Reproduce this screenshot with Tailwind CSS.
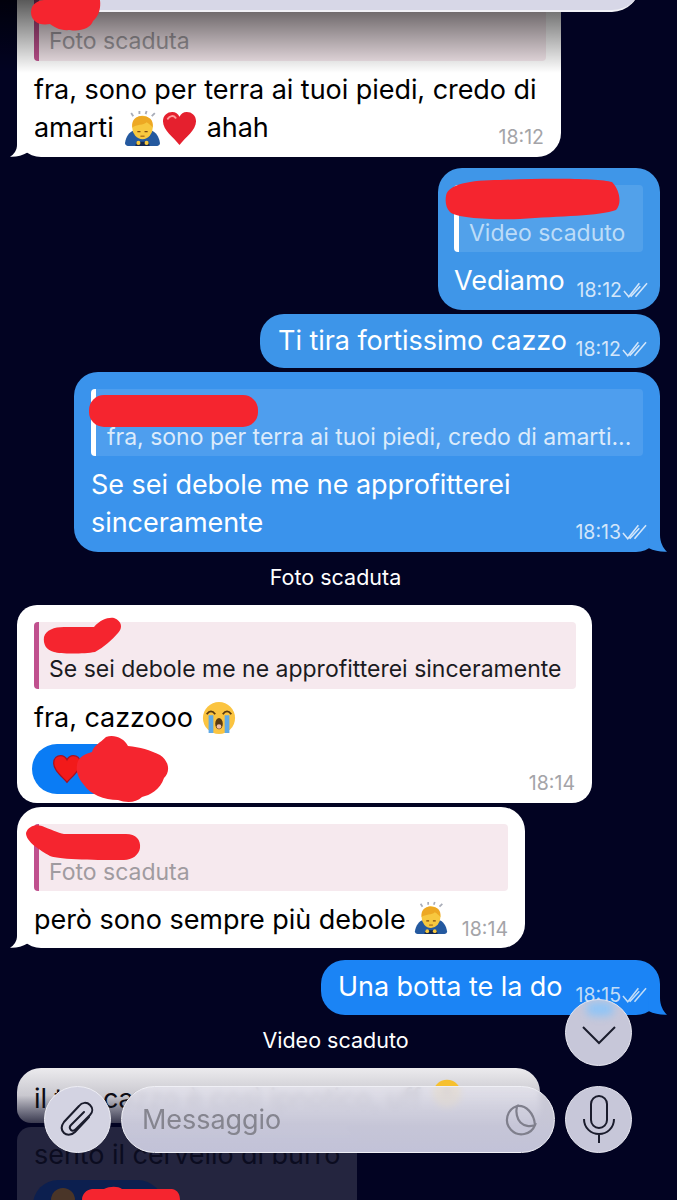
<!DOCTYPE html>
<html lang="it">
<head>
<meta charset="UTF-8">
<meta name="viewport" content="width=device-width, initial-scale=1.0">
<title>Chat</title>
<script src="https://cdn.jsdelivr.net/npm/@tailwindcss/browser@4"></script>
</head>
<body class="bg-[#020322]">
<!-- shared icons -->
<svg class="hidden">
  <symbol id="ticks" viewBox="0 0 26 16"><path d="M1 9l5 6L17 1M8 15L18 4M13 15L25 1" fill="none" stroke="currentColor" stroke-width="1.600"/></symbol>
  <symbol id="tail-left" viewBox="0 0 30 27"><path d="M9 0L9 15C9 20 6 24.500 2 26.700C8 27 14 26 20 22.300L20 0Z" fill="#fff"/></symbol>
  <symbol id="tail-right" viewBox="0 0 28 27"><path d="M20 0L20 10C20 17 23 23 27 26.700C21 27 14 26 8.600 23L8.600 0Z" fill="currentColor"/></symbol>
  <symbol id="heart" viewBox="0 0 36 36"><path d="M18 35C12 27 1 20 1 10.500C1 4.500 5.500 1 10.500 1C14 1 16.500 3 18 6C19.500 3 22 1 25.500 1C30.500 1 35 4.500 35 10.500C35 20 24 27 18 35Z" fill="#e5202e"/><path d="M6 8C8 4.500 12 4.500 14 7" fill="none" stroke="#ff9a9a" stroke-width="2" stroke-linecap="round"/></symbol>
  <symbol id="bow" viewBox="0 0 36 36">
    <path d="M9 6L7 3M15 4V1M21 4L22 1M27 6L30 3" stroke="#a9adb8" stroke-width="1.800" fill="none"/>
    <path d="M1 32C2 26 5 21 10 20H26C31 21 34 26 35 32C35 35 32 35 29 35H7C4 35 1 35 1 32Z" fill="#24599f"/>
    <path d="M12 31H24L25 35H11Z" fill="#14284f"/>
    <ellipse cx="18" cy="17" rx="10" ry="11.500" fill="#f7c83f"/>
    <path d="M8 17C7 9 13 5.500 18 6C24 6 29 9 28 17C26 15 24 13 22 12C19 15 12 14 8 17Z" fill="#eda823"/>
    <path d="M13 21h3M20 21h3" stroke="#7a4a12" stroke-width="1.300"/>
    <path d="M16 25.500h4" stroke="#a5661a" stroke-width="1.200"/>
    <circle cx="14" cy="32" r="2" fill="#f7c83f"/><circle cx="22" cy="32" r="2" fill="#f7c83f"/>
  </symbol>
</svg>

<div class="relative w-[677px] h-[1200px] overflow-hidden bg-[#020322] font-['Inter','Liberation_Sans',sans-serif] text-[27px] leading-[38px] tracking-[-0.05px]">

  <div class="flex flex-col -mt-[24px]">

    <!-- incoming 1 -->
    <div class="relative ml-[17px] w-[544px] h-[181px] bg-white rounded-[24px] px-[17px] pt-[17px]">
      <div class="h-[68px] w-[512px] bg-[#f6e9ee] rounded-[4px] border-l-[5px] border-[#c0508e] pl-[10px] pt-[31px] text-[23px] leading-[34px] tracking-normal text-[#a09ba0]">Foto scaduta</div>
      <div class="mt-[10px] whitespace-nowrap">fra, sono per terra ai tuoi piedi, credo di</div>
      <div class="flex justify-between items-end whitespace-nowrap">
        <div class="flex items-center">amarti
          <svg class="w-[37px] h-[37px] ml-[10px]"><use href="#bow"/></svg>
          <svg class="w-[35px] h-[35px] ml-[1px]"><use href="#heart"/></svg>
          <span class="ml-[10px]">ahah</span>
        </div>
        <span class="text-[19.500px] leading-[24px] tracking-normal text-[#a4a4a8] translate-y-[2px]">18:12</span>
      </div>
      <svg class="absolute -left-[9px] bottom-0 w-[30px] h-[27px]"><use href="#tail-left"/></svg>
    </div>

    <!-- outgoing 1 -->
    <div class="relative self-end mt-[11px] mr-[17px] w-[222px] h-[142px] bg-[#3f96e8] rounded-[24px] px-[16px] pt-[17px] text-white">
      <div class="h-[67px] w-[189px] bg-white/10 rounded-[4px] border-l-[5px] border-white pl-[10px] pt-[31px] text-[23px] leading-[34px] tracking-normal text-[#bcdcf8] whitespace-nowrap">Video scaduto</div>
      <div class="mt-[10px] flex justify-between items-end whitespace-nowrap">
        <span>Vediamo</span>
        <span class="flex items-center text-[19.500px] leading-[24px] tracking-normal text-[#d3e6fa] -mr-[4px] translate-y-[2px]">18:12<svg class="w-[25px] h-[16px] ml-[1px]"><use href="#ticks"/></svg></span>
      </div>
    </div>

    <!-- outgoing 2 -->
    <div class="self-end mt-[4px] mr-[17px] w-[400px] h-[54px] bg-[#3d95e9] rounded-[24px] pl-[18px] pr-[13px] pt-[8px] text-white flex justify-between whitespace-nowrap">
      <span>Ti tira fortissimo cazzo</span>
      <span class="flex items-center h-[24px] mt-[15px] text-[19.500px] leading-[24px] tracking-normal text-[#d3e6fa]">18:12<svg class="w-[25px] h-[16px] ml-[1px]"><use href="#ticks"/></svg></span>
    </div>

    <!-- outgoing 3 -->
    <div class="relative self-end mt-[4px] mr-[17px] w-[586px] h-[180px] bg-[#3a93ec] text-[#3a93ec] rounded-[24px] px-[17px] pt-[17px]">
      <div class="h-[67px] w-[552px] bg-white/10 rounded-[4px] border-l-[5px] border-white pl-[11px] pt-[31px] text-[23px] leading-[34px] tracking-normal text-[#dcebfb] whitespace-nowrap">fra, sono per terra ai tuoi piedi, credo di amarti...</div>
      <div class="mt-[10px] text-white whitespace-nowrap">Se sei debole me ne approfitterei</div>
      <div class="flex justify-between items-end text-white whitespace-nowrap">
        <span>sinceramente</span>
        <span class="flex items-center text-[19.500px] leading-[24px] tracking-normal text-[#d3e6fa] -mr-[4px] translate-y-[2px]">18:13<svg class="w-[25px] h-[16px] ml-[1px]"><use href="#ticks"/></svg></span>
      </div>
      <svg class="absolute -right-[8px] bottom-0 w-[28px] h-[27px]"><use href="#tail-right"/></svg>
    </div>

    <div class="mt-[11px] h-[28px] pr-[6px] text-center text-white text-[21.500px] leading-[28px] tracking-normal">Foto scaduta</div>

    <!-- incoming 2 -->
    <div class="relative mt-[14px] ml-[17px] w-[575px] h-[198px] bg-white rounded-[20px] px-[17px] pt-[17px]">
      <div class="h-[67px] w-[542px] bg-[#f6e9ee] rounded-[4px] border-l-[5px] border-[#c0508e] pl-[10px] pt-[30px] text-[23px] leading-[34px] tracking-normal text-[#1b1b1f] whitespace-nowrap">Se sei debole me ne approfitterei sinceramente</div>
      <div class="mt-[10px] flex items-center whitespace-nowrap">fra, cazzooo
        <svg class="w-[34px] h-[34px] ml-[9px]" viewBox="0 0 36 36">
          <circle cx="18" cy="18" r="17" fill="#fbc440"/>
          <path d="M5 14C8 10 11 10 14 14M22 14C25 10 28 10 31 14" fill="none" stroke="#5a3a10" stroke-width="2"/>
          <path d="M7 15h5v19H7zM24 15h5v19h-5z" fill="#5fa9e6"/>
          <ellipse cx="18" cy="24" rx="4" ry="6" fill="#5a3a10"/>
          <ellipse cx="18" cy="27" rx="2.500" ry="2.500" fill="#f0c0a8"/>
        </svg>
      </div>
      <div class="mt-[7px] -ml-[2px] flex justify-between items-end">
        <div class="w-[100px] h-[50px] bg-[#0a7cf5] rounded-full pl-[20px] pt-[10px]"><svg class="w-[30px] h-[30px]" viewBox="0 0 36 36"><path d="M18 34C12 27 2 20 2 11C2 5 6 2 10.500 2C14 2 16.500 4 18 7C19.500 4 22 2 25.500 2C30 2 34 5 34 11C34 20 24 27 18 34Z" fill="#f21a1a" stroke="#a81020" stroke-width="1.500"/></svg></div>
        <span class="text-[19.500px] leading-[24px] tracking-normal text-[#a4a4a8] -mb-[1px]">18:14</span>
      </div>
    </div>

    <!-- incoming 3 -->
    <div class="relative mt-[4px] ml-[17px] w-[508px] h-[141px] bg-white rounded-[24px] px-[17px] pt-[17px]">
      <div class="h-[67px] w-[474px] bg-[#f6e9ee] rounded-[4px] border-l-[5px] border-[#c0508e] pl-[10px] pt-[31px] text-[23px] leading-[34px] tracking-normal text-[#a09ba0]">Foto scaduta</div>
      <div class="mt-[10px] flex justify-between items-end whitespace-nowrap">
        <div class="flex items-center">però sono sempre più debole
          <svg class="w-[34px] h-[34px] ml-[8px] -mt-[5px]"><use href="#bow"/></svg>
        </div>
        <span class="text-[19.500px] leading-[24px] tracking-normal text-[#a4a4a8] translate-y-[2px]">18:14</span>
      </div>
      <svg class="absolute -left-[9px] bottom-0 w-[30px] h-[27px]"><use href="#tail-left"/></svg>
    </div>

    <!-- outgoing 4 -->
    <div class="relative self-end mt-[12px] mr-[17px] w-[339px] h-[55px] bg-[#1b84f5] text-[#1b84f5] rounded-[24px] pl-[17px] pr-[13px] pt-[8px] flex justify-between whitespace-nowrap">
      <span class="text-white">Una botta te la do</span>
      <span class="flex items-center h-[24px] mt-[15px] text-[19.500px] leading-[24px] tracking-normal text-[#c2ddf7]">18:15<svg class="w-[25px] h-[16px] ml-[1px]"><use href="#ticks"/></svg></span>
      <svg class="absolute -right-[8px] bottom-0 w-[28px] h-[27px]"><use href="#tail-right"/></svg>
    </div>

    <div class="mt-[11px] h-[28px] pr-[6px] text-center text-white text-[21.500px] leading-[28px] tracking-normal">Video scaduto</div>

    <!-- incoming, fading under the input bar -->
    <div class="mt-[14px] ml-[17px] w-[523px] h-[55px] bg-gradient-to-b from-[#ecebee] via-[#c9c8cf] to-[#3b3b50] rounded-t-[24px] rounded-b-[14px] pl-[17px] pt-[6px] flex items-center whitespace-nowrap text-[#0c0c14]">il tuo cazzo è così ipnotico, uff
      <svg class="w-[30px] h-[30px] ml-[11px] -mt-[10px]" viewBox="0 0 36 36"><circle cx="18" cy="18" r="17" fill="#f6c02e"/><circle cx="18" cy="15" r="5" fill="#a87a20"/></svg>
    </div>

    <div class="mt-[4px] ml-[17px] w-[340px] h-[90px] bg-[#24253f] rounded-t-[14px] pl-[17px] pt-[9px] whitespace-nowrap text-[#0b0c20]">sento il cervello di burro
      <div class="mt-[6px] -ml-[1px] w-[130px] h-[50px] bg-[#0c1f4f] rounded-full pl-[18px] pt-[8px]"><div class="w-[24px] h-[24px] rounded-full bg-[#4a3528]"></div></div>
    </div>
  </div>

  <!-- top bar darkening + remnant of the pinned panel -->
  <div class="absolute left-0 top-0 w-[561px] h-[73px] bg-gradient-to-b from-black/65 to-transparent"></div>
  <div class="absolute left-[58px] top-[-20px] w-[582px] h-[32px] bg-[#d7d7e7] border-b-2 border-[#f1f1f6] rounded-br-[28px]"></div>

  <!-- scribbled-out names -->
  <svg class="absolute inset-0 w-[677px] h-[1200px] pointer-events-none" viewBox="0 0 677 1200" fill="#f5252f">
    <path d="M31 12C31 3 40 0 44 0H100C101 8 99 16 93 21C91 28 80 32 70 30C60 31 54 27 50 24C40 26 31 22 31 12Z"/>
    <path d="M446 196C448 184 470 180 500 180C540 178 600 178 612 182C620 190 622 204 616 210C600 216 560 216 520 219C490 220 456 218 450 212C446 208 445 202 446 196Z"/>
    <rect x="89" y="395" width="169" height="32" rx="15"/>
    <path d="M44 637C46 630 54 627 64 627H94C100 620 108 617 114 618C122 621 123 628 118 633C112 640 104 647 95 652C84 654 60 654 54 652C46 650 43 644 44 637Z"/>
    <path d="M77 765C78 756 86 754 92 752C94 745 100 743 106 737C114 734 124 738 128 746C140 747 150 750 160 755C170 762 170 772 164 778C160 790 150 795 142 797C136 803 126 803 118 800C104 800 90 794 84 785C78 778 76 772 77 765Z"/>
    <path d="M26 833C28 826 36 824 42 826C50 829 58 833 64 834H126C136 834 141 840 140 848C139 855 132 860 124 860C100 860 60 860 50 856C40 850 26 842 26 833Z"/>
    <path d="M82 1200C82 1194 86 1190 92 1189H104C110 1186 118 1186 122 1189H172C178 1190 180 1195 180 1200Z"/>
  </svg>

  <!-- scroll to bottom -->
  <div class="absolute left-[565px] top-[999px] w-[67px] h-[67px] rounded-full bg-[#c7c7d9] border-[1.500px] border-[#e6e6ef] flex items-center justify-center overflow-hidden">
    <div class="absolute top-[2px] left-[20px] w-[28px] h-[14px] rounded-full bg-[#8fc4f6] blur-[4px]"></div>
    <svg class="relative w-[36px] h-[22px] mt-[4px]" viewBox="0 0 36 22"><path d="M2 3L18 19L34 3" fill="none" stroke="#1a1c2c" stroke-width="2"/></svg>
  </div>

  <!-- input row -->
  <div class="absolute left-[44px] top-[1086px] flex gap-[10px]">
    <div class="w-[67px] h-[67px] rounded-full bg-[#d3d3e2] border-[1.500px] border-[#eeeef5] flex items-center justify-center">
      <svg class="w-[36px] h-[40px]" viewBox="0 0 36 40"><path d="M29 17L15 32C11 36 6 35 4 33C1 30 1 26 4 22L19 6C22 2 27 2 30 5C33 8 33 12 30 15L16 29C14 31 12 31 11 30C9 28 10 26 11 25L24 12" fill="none" stroke="#1a1c2c" stroke-width="2" stroke-linecap="round"/></svg>
    </div>
    <div class="relative w-[434px] h-[67px] rounded-full bg-gradient-to-b from-[#e2e1ea]/90 to-[#c2c2d8] backdrop-blur-[3px] border-[1.500px] border-[#f0f0f6] pl-[20px] flex items-center text-[#85858f] text-[27px] whitespace-nowrap">Messaggio
      <svg class="absolute right-[17px] top-[17px] w-[33px] h-[33px]" viewBox="0 0 33 33"><path d="M13 2A14.500 14.500 0 1 0 31 21C26 23 20 22 16.500 18.500C13 15 11.500 8 13 2ZM13 2C22 1 30 9 31 21" fill="none" stroke="#7f7f8c" stroke-width="2.200"/></svg>
    </div>
  </div>
  <div class="absolute left-[565px] top-[1086px] w-[67px] h-[67px] rounded-full bg-[#c7c7d9] border-[1.500px] border-[#e6e6ef] flex items-center justify-center">
    <svg class="w-[34px] h-[50px]" viewBox="0 0 34 50"><rect x="9" y="1" width="16" height="32" rx="8" fill="none" stroke="#1a1c2c" stroke-width="2"/><path d="M2 24C2 33 9 39 17 39C25 39 32 33 32 24M17 39V48" fill="none" stroke="#1a1c2c" stroke-width="2"/></svg>
  </div>
</div>
</body>
</html>
